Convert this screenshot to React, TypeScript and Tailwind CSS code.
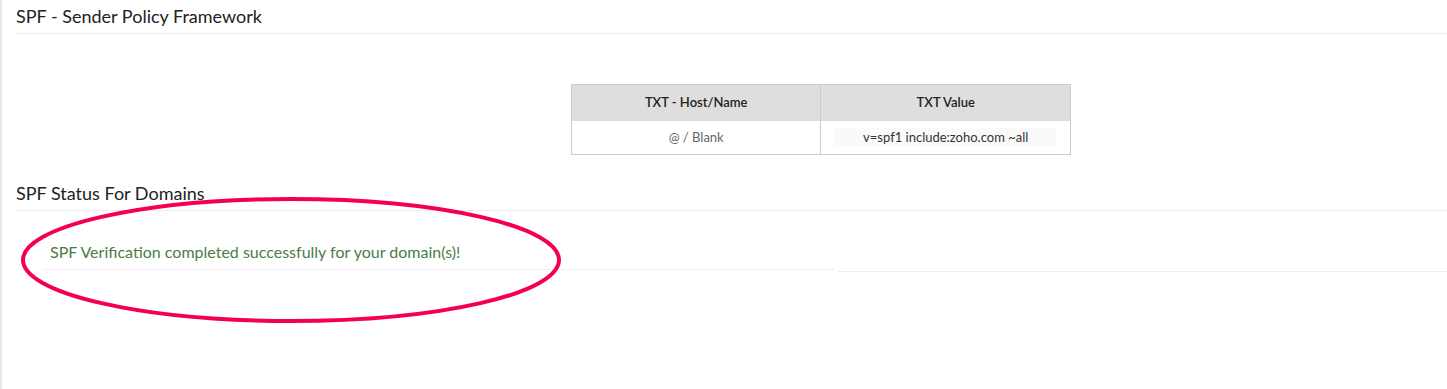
import React from 'react';

const App: React.FC = () => {
  return (
    <div
      className="relative h-[389px] w-[1447px] overflow-hidden bg-white border-l-2 border-[#e6e6e6]"
      style={{ fontFamily: 'Lato, "Open Sans", sans-serif' }}
    >
      {/* === SPF HEADER === */}
      <div className="pl-[14px]">
        <h2 className="pt-[7px] pb-[7px] text-[18px] leading-[19px] text-[#222] border-b border-[#ececec]">
          SPF - Sender Policy Framework
        </h2>
      </div>

      <div className="pt-[50px] pl-[569px]">
        <table className="w-[500px] border-collapse border border-[#cccccc] text-[13px]">
          <thead>
            <tr className="bg-[#dedede] h-[36px]">
              <th className="w-[250px] border-r border-[#cccccc] font-semibold text-[#222]">TXT - Host/Name</th>
              <th className="w-[250px] font-semibold text-[#222]">TXT Value</th>
            </tr>
          </thead>
          <tbody>
            <tr className="h-[34px]">
              <td className="border-r border-[#cccccc] text-center text-[#666]">@ / Blank</td>
              <td className="px-[14px] text-center">
                <div className="bg-[#fafafa] leading-[18px] text-[#333]">v=spf1 include:zoho.com ~all</div>
              </td>
            </tr>
          </tbody>
        </table>
      </div>

      {/* === STATUS === */}
      <div className="pl-[14px] pt-[29px]">
        <h2 className="pb-[7px] text-[18px] leading-[19px] text-[#222] border-b border-[#ececec]">
          SPF Status For Domains
        </h2>
      </div>

      <div className="flex items-start pt-[31px]">
        <div className="ml-[41px] w-[791px] border-b border-[#f0f0f0] pl-[7px] pb-[7px] text-[16px] leading-[20px] text-[#4a7d45]">
          SPF Verification completed successfully for your domain(s)!
        </div>
        <div className="flex-1 ml-[4px] mt-[29px] border-b border-[#eeeeee]" />
      </div>

      {/* annotation ellipse */}
      <svg className="absolute left-0 top-0 pointer-events-none" width="1447" height="389">
        <ellipse cx="289" cy="260" rx="268" ry="61" fill="none" stroke="#f5004f" strokeWidth="4" />
      </svg>
    </div>
  );
};

export default App;
